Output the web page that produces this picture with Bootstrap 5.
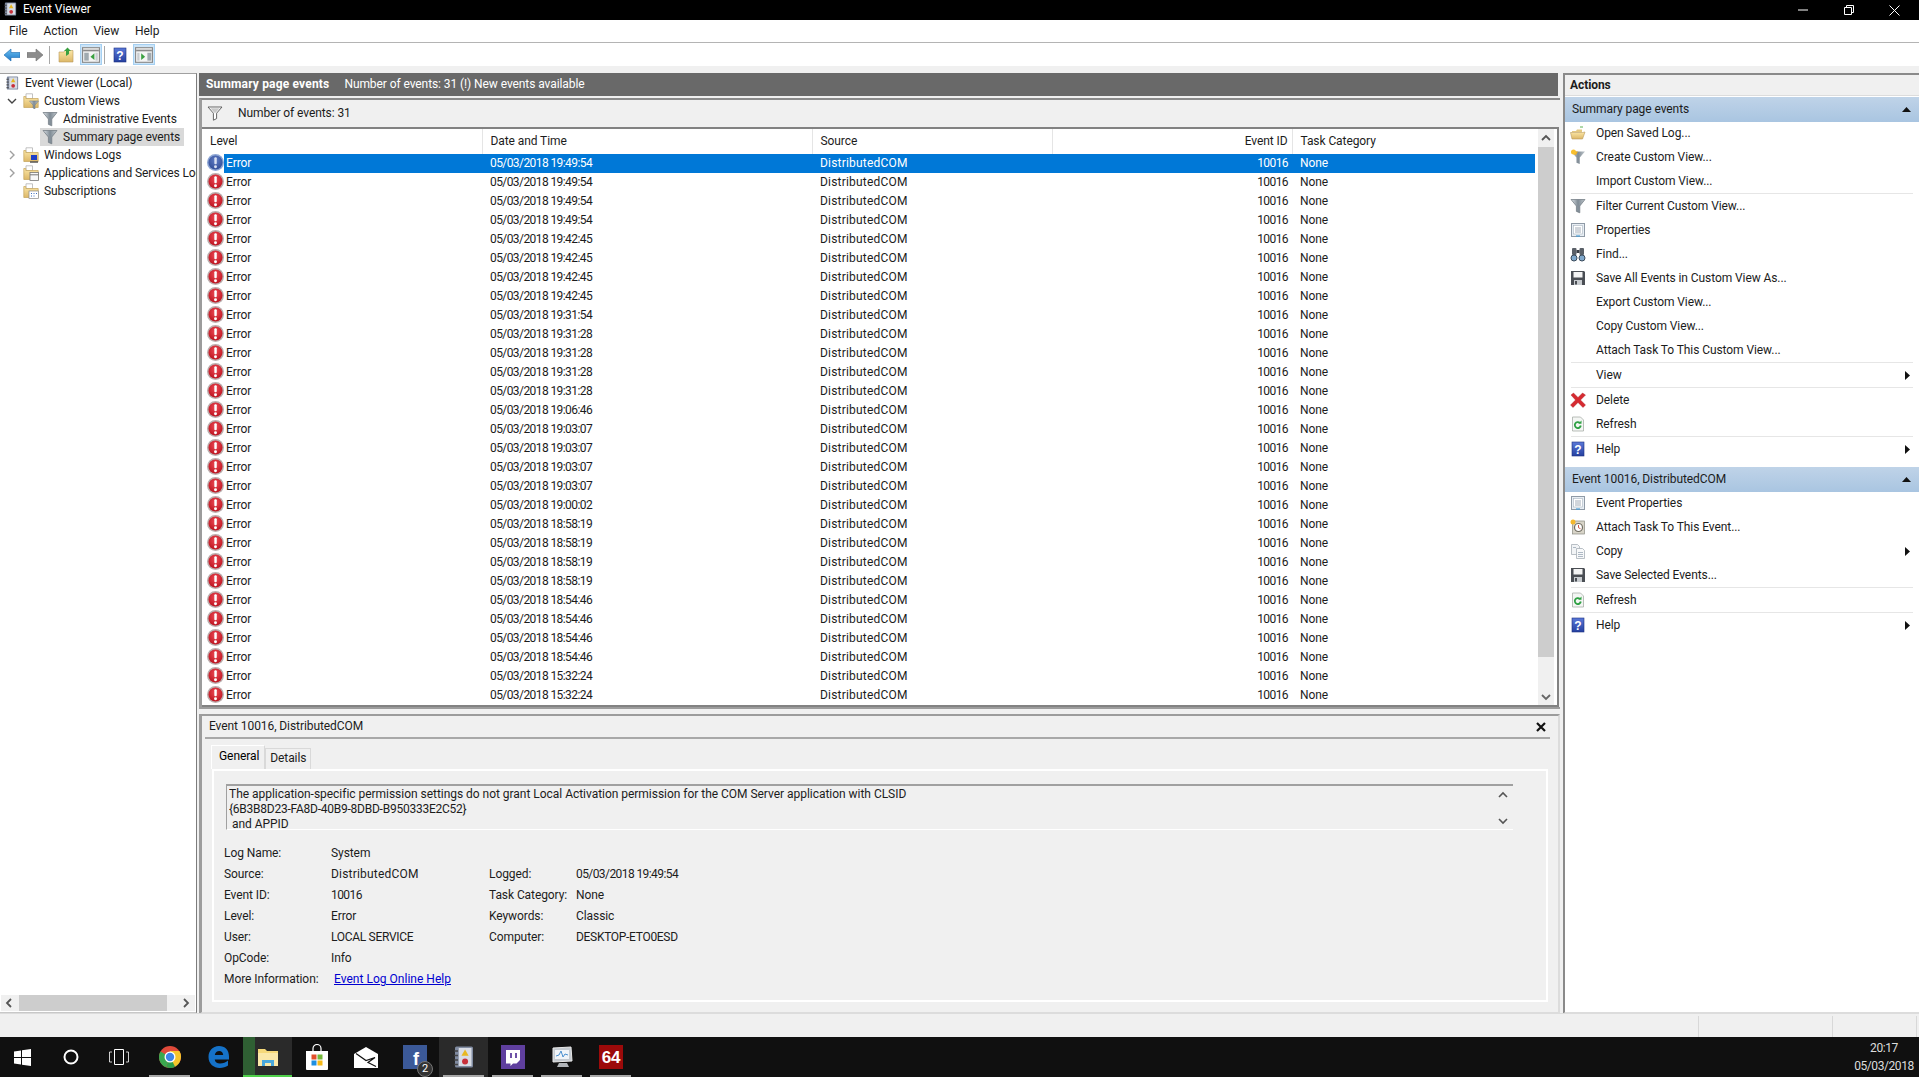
<!DOCTYPE html>
<html lang="en">
  <head>
    <meta charset="UTF-8" />
    <meta name="viewport" content="width=device-width, initial-scale=1.0" />
    <title>Event Viewer</title>
    <link href="https://cdn.jsdelivr.net/npm/bootstrap@5.3.3/dist/css/bootstrap.min.css" rel="stylesheet" />
    <style>
      html, body { height: 100%; overflow: hidden; }
      body { font: 12px/1.2 Roboto, "Liberation Sans", sans-serif; color: #1c1c1c; background: #f0f0f0; letter-spacing: -0.08px; }
      svg { display: block; flex: none; }
      .app-shell { width: 1919px; height: 1077px; }
      .num-txt { letter-spacing: -0.58px; }
      .src-txt { letter-spacing: 0.2px; }
      .cap-txt { letter-spacing: -0.3px; }
      .guid-txt { letter-spacing: -0.24px; }

      /* title, menu, toolbar */
      .title-bar { height: 20px; background: #000; color: #fff; padding: 0 0 2px 3px; }
      .title-bar .ttl { margin-left: 5px; }
      .win-btn { width: 45.5px; height: 20px; margin-top: 2px; }
      .win-btns { padding-right: 2px; }
      .menu-bar { height: 23px; background: #fff; border-bottom: 1px solid #b4b4b4; padding-left: 1px; }
      .menu-bar span { padding: 0 8px; }
      .tool-bar { height: 23px; background: #fff; padding-left: 4px; }
      .tool-btn { width: 16px; height: 16px; margin-right: 7px; }
      .tool-sep { width: 1px; height: 18px; background: #a8a8a8; margin: 0 8px 0 -1px; }
      .tool-on { width: 22px; height: 21px; background: #cce4f7; border: 1px solid #a5d0f2; margin: 0 3px 0 -1px; }
      .tool-help { margin: 0 6px 0 -1px; }
      .work-area { height: 947px; padding-top: 7px; }

      /* tree */
      .tree-pane { width: 197px; height: 941px; background: #fff; border-top: 1px solid #a0a0a0; border-right: 1px solid #7c7c7c; border-bottom: 2px solid #c8c8c8; }
      .tree-list { overflow: hidden; white-space: nowrap; }
      .tree-row { height: 18px; }
      .tree-row .lbl { margin-left: 5px; }
      .ind-0 { padding-left: 5px; }
      .ind-1 { padding-left: 6px; }
      .ind-2 { margin-left: 40px; padding-left: 2px; width: 144px; }
      .tree-sel { background: #d9d9d9; }
      .tree-tog { width: 12px; margin-right: 5px; }
      .hscroll { height: 16px; background: #f0f0f0; padding: 0 2px 0 4px; margin: 0 1px 1px 1px; }
      .hscroll .thumb { width: 148px; height: 16px; background: #cdcdcd; margin: 0 15px 0 6px; }

      /* center column */
      .mid-pane { width: 1361px; margin-left: 2px; height: 941px; }
      .mid-head { height: 23px; background: #696969; color: #fff; padding-left: 7px; margin-right: 2px; }
      .mid-head b { margin-right: 15px; letter-spacing: 0.17px; }
      .list-frame { height: 611px; margin-top: 2px; border: 2px solid #9c9c9c; border-right: 0; border-left: 3px solid #9c9c9c; border-top-color: #8a8a8a; padding-right: 2px; }
      .filter-strip { height: 29px; border-bottom: 2px solid #828282; padding: 0 0 1px 5px; background: #f0f0f0; margin-right: -1px; }
      .filter-strip .txt { margin-left: 15px; }
      .list-wrap { height: 578px; background: #fff; border-right: 2px solid #828282; border-bottom: 2px solid #828282; margin-right: -1px; }
      .list-body { width: 1333px; height: 576px; overflow: hidden; }
      .evt-table { table-layout: fixed; width: 1333px; margin: 0; --bs-table-bg: transparent; --bs-table-color: #1c1c1c; font-size: 12px; }
      .evt-table th, .evt-table td { padding: 0 7px 0 8px; height: 19px; font-weight: 400; line-height: 19px; white-space: nowrap; overflow: hidden; }
      .evt-table th { height: 25px; padding-top: 3px; vertical-align: top; border-right: 1px solid #e5e5e5; }
      .evt-table .text-end { padding-right: 4px; }
      .evt-table td.ico { padding: 0 0 0 5px; }
      .evt-table td.lvl { padding-left: 2px; }
      .evt-table tr.picked td:not(.ico) { background: #0078d7; color: #fff; }
      .v-scroll { width: 16px; height: 576px; background: #f0f0f0; margin-left: 3px; }
      .v-scroll .btn-zone { height: 18px; }
      .v-scroll .thumb { background: #cdcdcd; height: 510px; }
      .v-scroll .rest { height: 31px; }

      /* detail */
      .detail-panel { height: 300px; margin-top: 5px; border-top: 2px solid #9c9c9c; border-left: 3px solid #9c9c9c; border-bottom: 2px solid #dcdcdc; border-right: 2px solid #dcdcdc; }
      .detail-head { height: 23px; margin: 0 8px 0 3px; padding-left: 4px; border-bottom: 2px solid #a8a8a8; }
      .detail-body { padding: 6px 0 0 9px; }
      .nav-tabs.ev-tabs { border-bottom: 0; height: 24px; align-items: flex-end; --bs-nav-tabs-border-radius: 0; }
      .ev-tabs .nav-link { font-size: 12px; color: #1c1c1c; border: 1px solid #d9d9d9; border-bottom: 0; border-radius: 0; padding: 2px 4px 0 4px; height: 21px; background: #f0f0f0; margin: 0; }
      .ev-tabs .nav-link.active { height: 24px; padding: 3px 5px 0 7px; background: #f0f0f0; border-color: #fff #d9d9d9 #fff #fff; border-width: 1px 1px 0 1px; }
      .tab-box { height: 233px; width: 1336px; margin-left: 1px; border: 2px solid #fff; padding: 13px 0 0 10px; }
      .msg-box { height: 46px; width: 1287px; margin-left: 2px; border-top: 2px solid #a0a0a0; border-left: 1px solid #a0a0a0; border-bottom: 1px solid #fff; padding: 1px 0 0 2px; overflow: hidden; line-height: 15px; }
      .msg-text { width: 1265px; height: 42px; overflow: hidden; white-space: pre-wrap; letter-spacing: -0.03px; }
      .msg-scroll { width: 15px; height: 42px; margin-right: 3px; }
      .info-grid { display: grid; grid-template-columns: 107px 158px 87px auto; grid-auto-rows: 21px; align-items: center; margin-top: 13px; }
      .info-grid a { color: #0000d0; padding-left: 3px; letter-spacing: 0.02px; }

      /* actions */
      .act-pane { width: 356px; margin-left: 3px; height: 941px; background: #fff; border-top: 2px solid #8a8a8a; border-left: 2px solid #8a8a8a; border-bottom: 2px solid #dcdcdc; }
      .act-title { height: 21px; background: #f0f0f0; padding-left: 5px; font-weight: 700; border-bottom: 1px solid #dcdcdc; }
      .sec-head { height: 25px; background: linear-gradient(#bfd3e8, #a9c5e1); padding: 0 8px 0 7px; margin-top: 1px; }
      .act-list { margin: -1px 0 0; padding: 0; list-style: none; }
      .act-item { height: 24px; padding: 0 9px 0 5px; }
      .act-ico { width: 16px; height: 16px; margin-right: 10px; }
      .act-sep { height: 1px; margin: 0 6px; background: #e6e6e6; }
      .sec-tail { height: 5px; }

      /* status + taskbar */
      .stat-bar { height: 24px; background: #f0f0f0; border-top: 1px solid #dcdcdc; }
      .stat-cell { height: 21px; border-right: 1px solid #d8d8d8; margin-top: 2px; }
      .task-bar { height: 40px; background: #101010; color: #fff; }
      .task-slot { width: 49px; height: 40px; position: relative; }
      .task-slot.first { width: 47px; }
      .nudge { margin-right: 2px; }
      .task-slot.live::after { content: ""; position: absolute; left: 4px; right: 4px; bottom: 0; height: 2px; background: #a8a8a8; }
      .task-slot.cur { background: #2a2a2a; }
      .task-slot.folder { background: linear-gradient(to right, #2f5f33 12px, #2a2a2a 12px); }
      .task-slot.folder::after { left: 0; right: 0; background: #4fd04a; }
      .task-badge { position: absolute; left: 27px; top: 24px; width: 16px; height: 16px; border-radius: 50%; background: #333; border: 1px solid #777; font-size: 11px; line-height: 14px; text-align: center; }
      .clock-box { width: 62px; margin-right: 4px; text-align: center; line-height: 18px; color: #ddd; letter-spacing: -0.42px; }
    </style>
  </head>
  <body>
    <!-- shared icons -->
    <svg width="0" height="0" style="position:absolute">
      <defs>
        <radialGradient id="g-red" cx="50%" cy="35%" r="70%"><stop offset="0" stop-color="#ee4a55"/><stop offset="1" stop-color="#b8101c"/></radialGradient>
        <radialGradient id="g-blu" cx="50%" cy="35%" r="70%"><stop offset="0" stop-color="#5f7cc4"/><stop offset="1" stop-color="#2f4a94"/></radialGradient>
        <linearGradient id="g-fun" x1="0" y1="0" x2="1" y2="0"><stop offset="0" stop-color="#dfe4e8"/><stop offset=".5" stop-color="#7f8b95"/><stop offset="1" stop-color="#c0c7cc"/></linearGradient>
        <linearGradient id="g-fol" x1="0" y1="0" x2="0" y2="1"><stop offset="0" stop-color="#fbe6a6"/><stop offset="1" stop-color="#dcb767"/></linearGradient>
        <linearGradient id="g-arr" x1="0" y1="0" x2="0" y2="1"><stop offset="0" stop-color="#6cc0f0"/><stop offset="1" stop-color="#1e78c8"/></linearGradient>
        <linearGradient id="g-hlp" x1="0" y1="0" x2="0" y2="1"><stop offset="0" stop-color="#5a78d8"/><stop offset="1" stop-color="#2540a0"/></linearGradient>
      </defs>
      <symbol id="i-err" viewBox="0 0 16 16"><circle cx="8" cy="8" r="8" fill="#bcaeae"/><circle cx="8" cy="8" r="6.600" fill="url(#g-red)"/><rect x="6.900" y="3" width="2.300" height="6.600" rx="1" fill="#fff"/><circle cx="8" cy="12" r="1.400" fill="#fff"/></symbol>
      <symbol id="i-errs" viewBox="0 0 16 16"><circle cx="8" cy="8" r="8" fill="#8ea6d4"/><circle cx="8" cy="8" r="6.600" fill="url(#g-blu)"/><rect x="6.900" y="3" width="2.300" height="6.600" rx="1" fill="#d9e0f2"/><circle cx="8" cy="12" r="1.400" fill="#d9e0f2"/></symbol>
      <symbol id="i-log" viewBox="0 0 16 16"><rect x="2" y="1" width="12" height="14" rx="1" fill="#7f8aa0"/><rect x="4.500" y="2" width="8.500" height="12" fill="#d8dce4"/><path d="M8.700 3l2.400 4.200H6.300z" fill="#e8b820"/><circle cx="8.700" cy="11" r="2" fill="#c8303a"/><path d="M1.500 4h2.500M1.500 7h2.500M1.500 10h2.500M1.500 13h2.500" stroke="#444" stroke-width="1"/></symbol>
      <symbol id="i-fol" viewBox="0 0 16 16"><path d="M3 .800h6.500v5H3z" fill="#fff" stroke="#a8a8a8" stroke-width=".7"/><path d="M.800 3.500h2v2h12.400v9H.800z" fill="url(#g-fol)" stroke="#c4a35a" stroke-width=".7"/></symbol>
      <symbol id="i-fol-f" viewBox="0 0 16 16"><use href="#i-fol"/><path d="M6.500 8h9l-3.500 4v4l-2-1v-3z" fill="url(#g-fun)" stroke="#6a747c" stroke-width=".5"/></symbol>
      <symbol id="i-fol-w" viewBox="0 0 16 16"><use href="#i-fol"/><rect x="8" y="8" width="6" height="5" fill="#2040c8"/><path d="M7 15h8" stroke="#555" stroke-width="1.500"/></symbol>
      <symbol id="i-fol-a" viewBox="0 0 16 16"><use href="#i-fol"/><rect x="7" y="7.500" width="8.500" height="8" fill="#f8f8f8" stroke="#777" stroke-width=".8"/><path d="M7 9.800h8.500" stroke="#777"/></symbol>
      <symbol id="i-fol-s" viewBox="0 0 16 16"><use href="#i-fol"/><rect x="6" y="8" width="9.500" height="7.500" fill="#fff" stroke="#888" stroke-width=".7"/><path d="M8 10.500h1M10.500 10.500h1M13 10.500h1M8 13h1M10.500 13h1" stroke="#4070c0"/></symbol>
      <symbol id="i-fun" viewBox="0 0 16 16"><path d="M1 1.500h14L9.800 8v6.800l-3.400-1.400V8z" fill="url(#g-fun)" stroke="#6a747c" stroke-width=".7"/></symbol>
      <symbol id="i-funo" viewBox="0 0 16 16"><path d="M1 2h14L9.600 8.200v5.400l-3.200 1.600V8.200z" fill="#fff" stroke="#555" stroke-width=".9"/><path d="M3.400 3.200h9.200L8.600 7.800H7.400z" fill="#c8c8c8"/></symbol>
      <symbol id="i-funy" viewBox="0 0 16 16"><path d="M1 2.500h14L9.800 8.500v6.500l-3.400-1.300V8.500z" fill="url(#g-fun)"/><path d="M1 2.500h7L6 6 3 5z" fill="#f0b020"/><circle cx="3.500" cy="3" r="2.500" fill="#f8c030"/></symbol>
      <symbol id="i-open" viewBox="0 0 16 16"><path d="M2 6h4l1-1.500h5V7H2z" fill="#e4c880"/><path d="M.5 7.500h12L15 7l-2.500 7H2z" fill="url(#g-fol)" stroke="#b8985a" stroke-width=".6"/><path d="M10 2h3" stroke="#5fb050" stroke-width="1"/></symbol>
      <symbol id="i-prop" viewBox="0 0 16 16"><rect x="1.500" y="1.500" width="13" height="13" fill="#e8eef4" stroke="#8f9aa6"/><rect x="3.500" y="3.500" width="9" height="8.500" fill="#fff" stroke="#a8b4c0" stroke-width=".6"/><path d="M5 6h6M5 8h6M5 10h6" stroke="#8a98a6" stroke-width=".8"/><path d="M6 14h4" stroke="#4aa0d8" stroke-width="1.200"/></symbol>
      <symbol id="i-find" viewBox="0 0 16 16"><rect x="2" y="2" width="4.500" height="7" rx="1" fill="#5a6068"/><rect x="9.500" y="2" width="4.500" height="7" rx="1" fill="#5a6068"/><rect x="6.500" y="4" width="3" height="3" fill="#3a3f46"/><circle cx="4" cy="12" r="3" fill="#7fa8cc" stroke="#3a4a5a"/><circle cx="12" cy="12" r="3" fill="#7fa8cc" stroke="#3a4a5a"/></symbol>
      <symbol id="i-save" viewBox="0 0 16 16"><path d="M1 1h13l1 1v13H1z" fill="#4a4e54"/><rect x="3.500" y="2" width="9" height="5.500" fill="#f4f4f4"/><rect x="4" y="10" width="8" height="5" fill="#c8ccd0"/><rect x="5" y="11" width="2" height="3.500" fill="#4a4e54"/></symbol>
      <symbol id="i-del" viewBox="0 0 16 16"><path d="M1 3l2.500-2L8 5.500 12.500 1 15.500 3 10.500 8l5 5-2.500 2.500L8 10.500 3 15.500.5 13l5-5z" fill="#d62a30" stroke="#a81c22" stroke-width=".4"/></symbol>
      <symbol id="i-ref" viewBox="0 0 16 16"><path d="M2.500 1h8L13.500 4v11h-11z" fill="#f4f6f4" stroke="#a8aea8" stroke-width=".8"/><path d="M10.800 9.500a3 3 0 1 1-.9-2.600" fill="none" stroke="#2ea043" stroke-width="1.800"/><path d="M11.500 4.500v3.200h-3.200z" fill="#2ea043"/></symbol>
      <symbol id="i-hlp" viewBox="0 0 16 16"><rect x="2" y="1" width="12" height="14" fill="url(#g-hlp)" stroke="#1c3080" stroke-width=".6"/><text x="8" y="12.500" font-size="12" font-family="Liberation Sans, sans-serif" font-weight="700" text-anchor="middle" fill="#fff">?</text></symbol>
      <symbol id="i-task" viewBox="0 0 16 16"><rect x="2.500" y="2" width="12" height="13" fill="#d8d4c8" stroke="#8a8a80" stroke-width=".7"/><circle cx="8.500" cy="8.500" r="4" fill="#fff" stroke="#706c60" stroke-width="1.200"/><path d="M8.500 6v2.700l2 1" fill="none" stroke="#c84030" stroke-width=".9"/><circle cx="3" cy="3" r="2.500" fill="#f4b82c"/></symbol>
      <symbol id="i-copy" viewBox="0 0 16 16"><path d="M1.500 1.500h6l2 2v8h-8z" fill="#f2f4f6" stroke="#a8b0b8" stroke-width=".8"/><path d="M6.500 5.500h6l2 2v8h-8z" fill="#f8f9fa" stroke="#a8b0b8" stroke-width=".8"/><path d="M8 9.500h5M8 11.500h5M8 13.500h5M3 4.500h3" stroke="#9aa8b8" stroke-width=".8"/></symbol>
      <symbol id="i-pane-l" viewBox="0 0 16 16"><rect x=".5" y="1.500" width="15" height="13" fill="#f4f4f4" stroke="#8a8a8a"/><path d="M1 4h14" stroke="#8a8a8a" stroke-width="1.500"/><rect x="2" y="6" width="4" height="7" fill="#a0aab0"/><path d="M11 6.500v6L7.500 9.500z" fill="#3aa040"/><rect x="12" y="6" width="2" height="7" fill="#c8ccd0"/></symbol>
      <symbol id="i-pane-r" viewBox="0 0 16 16"><rect x=".5" y="1.500" width="15" height="13" fill="#f4f4f4" stroke="#8a8a8a"/><path d="M1 4h14" stroke="#8a8a8a" stroke-width="1.500"/><rect x="11" y="6" width="3.500" height="7" fill="#a0aab0"/><path d="M5.500 6.500v6L9 9.500z" fill="#3aa040"/><rect x="2" y="6" width="2" height="7" fill="#c8ccd0"/></symbol>
    </svg>

    <div class="app-shell d-flex flex-column">
      <!-- Title bar -->
      <div class="title-bar d-flex align-items-center">
        <svg width="15" height="16"><use href="#i-log"/></svg>
        <span class="ttl flex-grow-1">Event Viewer</span>
        <div class="win-btns d-flex">
          <div class="win-btn d-flex align-items-center justify-content-center"><svg width="10" height="10"><path d="M0 5h10" stroke="#fff"/></svg></div>
          <div class="win-btn d-flex align-items-center justify-content-center"><svg width="10" height="10"><path d="M.5 2.500h7v7h-7zM2.500 2.500v-2h7v7h-2" fill="none" stroke="#fff"/></svg></div>
          <div class="win-btn d-flex align-items-center justify-content-center"><svg width="11" height="11"><path d="M.5.500l10 10M10.500.500l-10 10" stroke="#fff"/></svg></div>
        </div>
      </div>

      <!-- Menu -->
      <div class="menu-bar d-flex align-items-center">
        <span>File</span><span>Action</span><span>View</span><span>Help</span>
      </div>

      <!-- Toolbar -->
      <div class="tool-bar d-flex align-items-center">
        <svg class="tool-btn" viewBox="0 0 16 16"><path d="M0 8l7-6v3.500h9v5H7V14z" fill="url(#g-arr)" stroke="#1a6ab0" stroke-width=".6"/></svg>
        <svg class="tool-btn" viewBox="0 0 16 16"><path d="M16 8L9 2v3.500H0v5h9V14z" fill="#8c8c8c" stroke="#707070" stroke-width=".6"/></svg>
        <div class="tool-sep"></div>
        <svg class="tool-btn" viewBox="0 0 16 16"><path d="M1 5h5l1-1.500h8V15H1z" fill="url(#g-fol)" stroke="#b8985a" stroke-width=".6"/><path d="M8 9V4H6l3.500-3.500L13 4h-2v3z" fill="#3aa040"/></svg>
        <div class="tool-on d-flex align-items-center justify-content-center"><svg width="18" height="18"><use href="#i-pane-l"/></svg></div>
        <div class="tool-sep"></div>
        <svg class="tool-btn tool-help" viewBox="0 0 16 16"><use href="#i-hlp"/></svg>
        <div class="tool-on d-flex align-items-center justify-content-center"><svg width="18" height="18"><use href="#i-pane-r"/></svg></div>
      </div>

      <div class="work-area d-flex">
        <!-- Tree -->
        <div class="tree-pane d-flex flex-column">
          <div class="tree-list flex-grow-1">
            <div class="tree-row ind-0 d-flex align-items-center"><svg width="15" height="16"><use href="#i-log"/></svg><span class="lbl">Event Viewer (Local)</span></div>
            <div class="tree-row ind-1 d-flex align-items-center"><svg class="tree-tog" viewBox="0 0 12 12" height="12"><path d="M2 4l4 4 4-4" fill="none" stroke="#444" stroke-width="1.400"/></svg><svg width="16" height="16"><use href="#i-fol-f"/></svg><span class="lbl">Custom Views</span></div>
            <div class="tree-row ind-2 d-flex align-items-center"><svg width="16" height="16"><use href="#i-fun"/></svg><span class="lbl">Administrative Events</span></div>
            <div class="tree-row ind-2 tree-sel d-flex align-items-center"><svg width="16" height="16"><use href="#i-fun"/></svg><span class="lbl">Summary page events</span></div>
            <div class="tree-row ind-1 d-flex align-items-center"><svg class="tree-tog" viewBox="0 0 12 12" height="12"><path d="M4 2l4 4-4 4" fill="none" stroke="#a0a0a0" stroke-width="1.400"/></svg><svg width="16" height="16"><use href="#i-fol-w"/></svg><span class="lbl">Windows Logs</span></div>
            <div class="tree-row ind-1 d-flex align-items-center"><svg class="tree-tog" viewBox="0 0 12 12" height="12"><path d="M4 2l4 4-4 4" fill="none" stroke="#a0a0a0" stroke-width="1.400"/></svg><svg width="16" height="16"><use href="#i-fol-a"/></svg><span class="lbl">Applications and Services Logs</span></div>
            <div class="tree-row ind-1 d-flex align-items-center"><span class="tree-tog"></span><svg width="16" height="16"><use href="#i-fol-s"/></svg><span class="lbl">Subscriptions</span></div>
          </div>
          <div class="hscroll d-flex align-items-center">
            <svg width="8" height="10"><path d="M6 1L2 5l4 4" fill="none" stroke="#555" stroke-width="1.800"/></svg>
            <div class="thumb"></div>
            <svg width="8" height="10"><path d="M2 1l4 4-4 4" fill="none" stroke="#555" stroke-width="1.800"/></svg>
          </div>
        </div>

        <!-- Center -->
        <div class="mid-pane d-flex flex-column">
          <div class="mid-head d-flex align-items-center"><b>Summary page events</b><span>Number of events: 31 (!) New events available</span></div>

          <div class="list-frame">
            <div class="filter-strip d-flex align-items-center">
              <svg width="16" height="16"><use href="#i-funo"/></svg>
              <span class="txt">Number of events: 31</span>
            </div>
            <div class="list-wrap d-flex">
              <div class="list-body">
                <table class="table table-borderless evt-table">
                  <colgroup><col style="width:22px" /><col style="width:258px" /><col style="width:330px" /><col style="width:240px" /><col style="width:240px" /><col style="width:243px" /></colgroup>
                  <thead>
                    <tr><th colspan="2">Level</th><th>Date and Time</th><th>Source</th><th class="text-end">Event ID</th><th>Task Category</th></tr>
                  </thead>
                  <tbody id="event-rows"></tbody>
                </table>
              </div>
              <div class="v-scroll">
                <div class="btn-zone d-flex align-items-center justify-content-center"><svg width="10" height="8"><path d="M1 6l4-4 4 4" fill="none" stroke="#555" stroke-width="1.800"/></svg></div>
                <div class="thumb"></div>
                <div class="rest"></div>
                <div class="btn-zone d-flex align-items-center justify-content-center"><svg width="10" height="8"><path d="M1 2l4 4 4-4" fill="none" stroke="#666" stroke-width="1.800"/></svg></div>
              </div>
            </div>
          </div>

          <div class="detail-panel">
            <div class="detail-head d-flex align-items-center justify-content-between">
              <span>Event 10016, DistributedCOM</span>
              <svg class="me-1" width="10" height="10"><path d="M1 1l8 8M9 1l-8 8" stroke="#111" stroke-width="2.200"/></svg>
            </div>
            <div class="detail-body">
              <ul class="nav nav-tabs ev-tabs">
                <li class="nav-item"><a class="nav-link active" href="#">General</a></li>
                <li class="nav-item"><a class="nav-link" href="#">Details</a></li>
              </ul>
              <div class="tab-box">
                <div class="msg-box d-flex justify-content-between">
                  <div class="msg-text">The application-specific permission settings do not grant Local Activation permission for the COM Server application with CLSID
<span class="guid-txt">{6B3B8D23-FA8D-40B9-8DBD-B950333E2C52}</span>
 and APPID</div>
                  <div class="msg-scroll d-flex flex-column justify-content-between align-items-center py-1">
                    <svg width="10" height="8"><path d="M1 6l4-4 4 4" fill="none" stroke="#555" stroke-width="1.600"/></svg>
                    <svg width="10" height="8"><path d="M1 2l4 4 4-4" fill="none" stroke="#555" stroke-width="1.600"/></svg>
                  </div>
                </div>
                <div class="info-grid">
                  <span>Log Name:</span><span>System</span><span></span><span></span>
                  <span>Source:</span><span class="src-txt">DistributedCOM</span><span>Logged:</span><span class="num-txt">05/03/2018 19:49:54</span>
                  <span>Event ID:</span><span class="num-txt">10016</span><span>Task Category:</span><span>None</span>
                  <span>Level:</span><span>Error</span><span>Keywords:</span><span>Classic</span>
                  <span>User:</span><span class="cap-txt">LOCAL SERVICE</span><span>Computer:</span><span class="cap-txt">DESKTOP-ETO0ESD</span>
                  <span>OpCode:</span><span>Info</span><span></span><span></span>
                  <span>More Information:</span><a href="#">Event Log Online Help</a>
                </div>
              </div>
            </div>
          </div>
        </div>

        <!-- Actions -->
        <div class="act-pane d-flex flex-column">
          <div class="act-title d-flex align-items-center">Actions</div>
          <div id="action-sections"></div>
        </div>
      </div>

      <!-- Status bar -->
      <div class="stat-bar d-flex">
        <div class="stat-cell" style="width:1699px"></div>
        <div class="stat-cell" style="width:134px"></div>
        <div class="stat-cell" style="width:84px"></div>
      </div>

      <!-- Taskbar -->
      <div class="task-bar d-flex align-items-center">
        <div class="task-slot first d-flex align-items-center justify-content-center"><svg class="nudge" width="17" height="17" viewBox="0 0 17 17"><path d="M0 2.500l7-1v6.500H0zM8 1.300L17 0v8H8zM0 9h7v6.500l-7-1zM8 9h9v8l-9-1.300z" fill="#fff"/></svg></div>
        <div class="task-slot d-flex align-items-center justify-content-center"><svg class="nudge" width="16" height="16"><circle cx="8" cy="8" r="6.500" fill="none" stroke="#fff" stroke-width="2"/></svg></div>
        <div class="task-slot d-flex align-items-center justify-content-center"><svg class="me-1" width="20" height="16"><path d="M5.500.500h9v15h-9z" fill="none" stroke="#fff"/><path d="M3 3H.500v10H3M17 3h2.500v10H17" fill="none" stroke="#fff" stroke-width=".8"/></svg></div>
        <div class="task-slot live d-flex align-items-center justify-content-center"><svg width="24" height="24" viewBox="0 0 24 24"><circle cx="12" cy="12" r="11" fill="#e04a3a"/><path d="M12 12L21.500 17.500A11 11 0 0 1 8 22.300z" fill="#2f9e4a"/><path d="M12 12L8 22.300A11 11 0 0 1 2.500 6.500z" fill="#3aa84f"/><path d="M12 6h9.400A11 11 0 0 1 17 21.500L12 12z" fill="#f6c52c"/><circle cx="12" cy="12" r="5.500" fill="#fff"/><circle cx="12" cy="12" r="4.200" fill="#3f85e8"/></svg></div>
        <div class="task-slot d-flex align-items-center justify-content-center"><svg width="22" height="24" viewBox="0 0 22 24"><path d="M11 1C4.500 1 .500 6 .500 12c0 7 5.500 11 11 11 3.500 0 6.500-1 8.500-2.500v-5c-2 1.800-5 3-8 3-3 0-5-1.500-5.300-4H21v-3C21 5 17 1 11 1zM6.800 10c.5-2.500 2.300-4 4.400-4 2.200 0 3.800 1.500 4 4z" fill="#1572c8"/></svg></div>
        <div class="task-slot cur folder live d-flex align-items-center justify-content-center"><svg width="22" height="22" viewBox="0 0 22 22"><path d="M1 3h7l2 2h11v15H1z" fill="#f6d97a"/><rect x="1" y="7" width="20" height="13" fill="#fbe8a8"/><path d="M5 20v-6h12v6h-3v-3H8v3z" fill="#4aa8dc"/></svg></div>
        <div class="task-slot d-flex align-items-center justify-content-center"><svg width="24" height="26" viewBox="0 0 24 26"><path d="M8 8V4.500a4 4 0 0 1 8 0V8" fill="none" stroke="#fff" stroke-width="1.200"/><path d="M1 7h22v18a1 1 0 0 1-1 1H2a1 1 0 0 1-1-1z" fill="#fff"/><rect x="6.500" y="10.500" width="5" height="5" fill="#e2502c"/><rect x="12.500" y="10.500" width="5" height="5" fill="#74b83a"/><rect x="6.500" y="16.500" width="5" height="5" fill="#1f8fe0"/><rect x="12.500" y="16.500" width="5" height="5" fill="#f7ba18"/></svg></div>
        <div class="task-slot d-flex align-items-center justify-content-center"><svg width="24" height="22" viewBox="0 0 24 22"><path d="M12 1l12 7v14H0V8z" fill="#fff"/><path d="M2 7.500l10 7 9-3-7 5 8 4" fill="none" stroke="#101010" stroke-width="1.200"/></svg></div>
        <div class="task-slot d-flex align-items-center justify-content-center"><svg width="24" height="24" viewBox="0 0 24 24"><rect width="24" height="24" fill="#3b5998"/><text x="13" y="20" font-size="18" font-weight="700" font-family="Liberation Sans, sans-serif" text-anchor="middle" fill="#fff">f</text></svg><span class="task-badge">2</span></div>
        <div class="task-slot cur live d-flex align-items-center justify-content-center"><svg width="24" height="26"><use href="#i-log"/></svg></div>
        <div class="task-slot live d-flex align-items-center justify-content-center"><svg width="24" height="24" viewBox="0 0 24 24"><rect width="24" height="24" fill="#5f3f9e"/><path d="M5 5h14v10l-3.500 3.500H12l-2.500 2.500V18.500H5z" fill="#fff"/><path d="M10 8v5M15 8v5" stroke="#5f3f9e" stroke-width="1.800"/></svg></div>
        <div class="task-slot live d-flex align-items-center justify-content-center"><svg width="24" height="24" viewBox="0 0 24 24"><path d="M3 3l18-1 1 14-19 1z" fill="#c4cad0" stroke="#e8e8e8"/><path d="M5 5h14v9H5z" fill="#f0f4f8"/><path d="M6 11l3-1 2-4 2 6 2-3 3 1" fill="none" stroke="#4a90d0"/><path d="M9 18h8l2 4H7z" fill="#b0b4b8"/></svg></div>
        <div class="task-slot live d-flex align-items-center justify-content-center"><svg width="24" height="24" viewBox="0 0 24 24"><rect width="24" height="24" fill="#9c0a0a"/><text x="12" y="18" font-size="17" font-weight="700" font-family="Liberation Sans, sans-serif" text-anchor="middle" fill="#fff">64</text></svg></div>
        <div class="flex-grow-1"></div>
        <div class="clock-box"><div>20:17</div><div>05/03/2018</div></div>
      </div>
    </div>

    <script src="https://cdn.jsdelivr.net/npm/bootstrap@5.3.3/dist/js/bootstrap.bundle.min.js"></script>
    <script>
      // Event rows: [time, how many in a row]
      const times = [
        ["19:49:54", 4], ["19:42:45", 4], ["19:31:54", 1], ["19:31:28", 4], ["19:06:46", 1],
        ["19:03:07", 4], ["19:00:02", 1], ["18:58:19", 4], ["18:54:46", 4], ["15:32:24", 3],
      ];
      let rows = "";
      let n = 0;
      times.forEach(([t, count]) => {
        for (let i = 0; i < count; i++) {
          const first = n === 0;
          rows += `<tr class="${first ? "picked" : ""}">
            <td class="ico"><svg width="17" height="17"><use href="#${first ? "i-errs" : "i-err"}"/></svg></td>
            <td class="lvl">Error</td><td class="num-txt">05/03/2018 ${t}</td><td class="src-txt">DistributedCOM</td><td class="text-end num-txt">10016</td><td>None</td></tr>`;
          n++;
        }
      });
      document.querySelector("#event-rows").innerHTML = rows;

      // Action panel: "-" is a separator line
      const sections = [
        ["Summary page events", [
          ["i-open", "Open Saved Log..."], ["i-funy", "Create Custom View..."], ["", "Import Custom View..."], "-",
          ["i-fun", "Filter Current Custom View..."], ["i-prop", "Properties"], ["i-find", "Find..."],
          ["i-save", "Save All Events in Custom View As..."], ["", "Export Custom View..."], ["", "Copy Custom View..."],
          ["", "Attach Task To This Custom View..."], "-", ["", "View", 1], "-",
          ["i-del", "Delete"], ["i-ref", "Refresh"], "-", ["i-hlp", "Help", 1],
        ]],
        ["Event 10016, DistributedCOM", [
          ["i-prop", "Event Properties"], ["i-task", "Attach Task To This Event..."], ["i-copy", "Copy", 1],
          ["i-save", "Save Selected Events..."], "-", ["i-ref", "Refresh"], "-", ["i-hlp", "Help", 1],
        ]],
      ];
      const caretUp = '<svg width="9" height="5"><path d="M4.500 0L9 5H0z" fill="#111"/></svg>';
      const caretRight = '<svg width="5" height="9"><path d="M0 0l5 4.500L0 9z" fill="#111"/></svg>';
      document.querySelector("#action-sections").innerHTML = sections.map(([title, items]) => {
        const list = items.map((it) => {
          if (it === "-") return '<li class="act-sep"></li>';
          const icon = it[0] ? `<svg class="act-ico"><use href="#${it[0]}"/></svg>` : '<span class="act-ico"></span>';
          return `<li class="act-item d-flex align-items-center">${icon}<span class="flex-grow-1">${it[1]}</span>${it[2] ? caretRight : ""}</li>`;
        }).join("");
        return `<div class="sec-head d-flex align-items-center justify-content-between"><span>${title}</span>${caretUp}</div>
          <ul class="act-list">${list}</ul><div class="sec-tail"></div>`;
      }).join("");
    </script>
  </body>
</html>
